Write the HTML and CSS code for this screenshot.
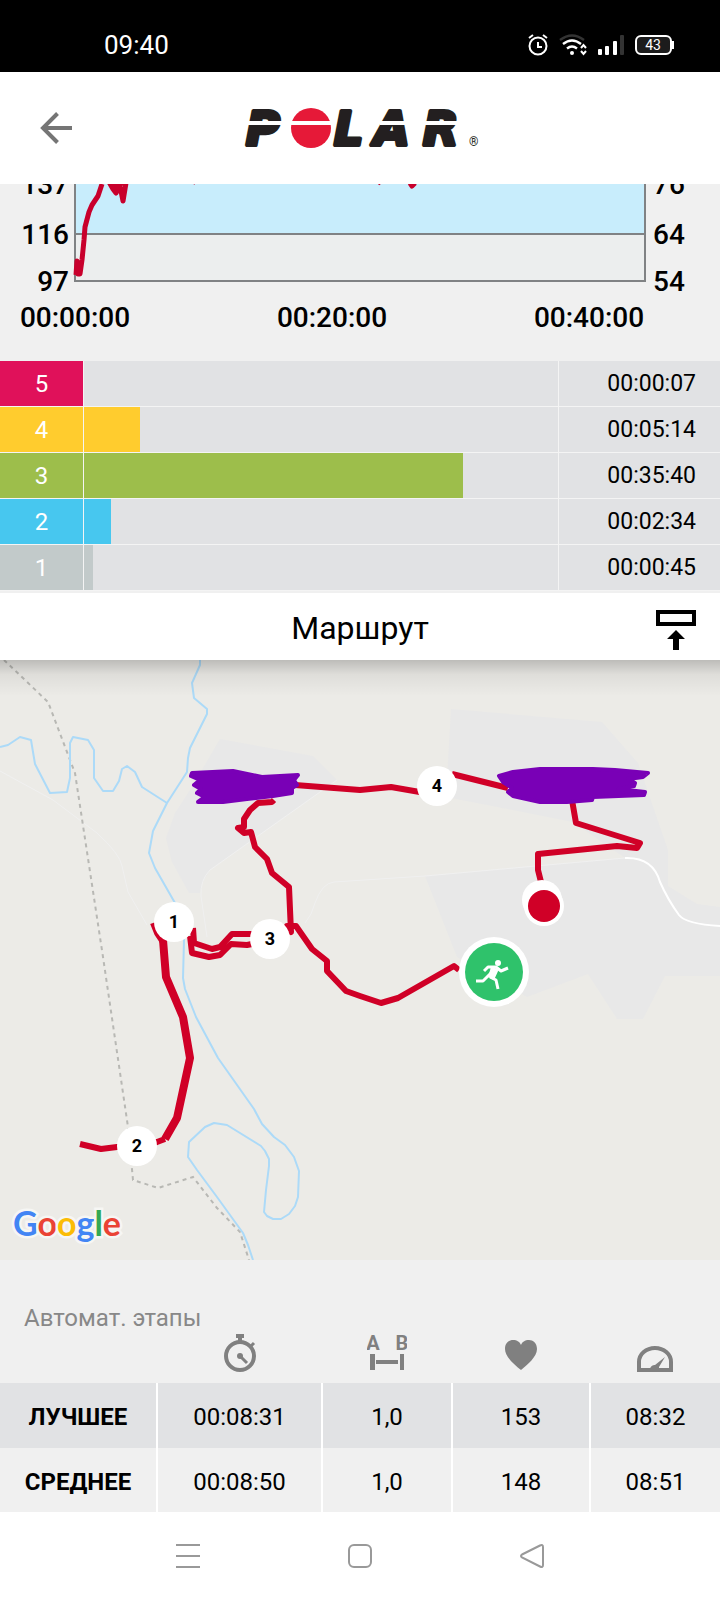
FILE: index.html
```html
<!DOCTYPE html>
<html lang="ru">
<head>
	<meta charset="UTF-8">
	<meta name="viewport" content="width=device-width, initial-scale=1">
	<title>Polar</title>
	<link rel="stylesheet" href="styles.css">
</head>
<body>
<div class="status">
	<span class="clock">09:40</span>
	<div class="status-icons">
		<svg width="20" height="22" viewBox="0 0 20 22" fill="none" stroke="#fff" stroke-width="2">
			<circle cx="10" cy="12" r="8.5"/><path d="M10 8v5h4M1 4l4-3M19 4l-4-3"/>
		</svg>
		<svg width="28" height="22" viewBox="0 0 28 22" fill="none" stroke="#fff" stroke-width="2.4">
			<path d="M1 6Q13-3 25 6" stroke="#333"/>
			<path d="M4 10q9-7 18 0M8 14.500q5-4 10 0"/>
			<circle cx="13" cy="19" r="2" fill="#fff" stroke="none"/>
			<path d="M22 14l2.500-3 2.500 3M22 17l2.500 3 2.500-3" stroke-width="2"/>
		</svg>
		<svg width="26" height="22" viewBox="0 0 26 22" fill="#fff">
			<rect y="15" width="4" height="6" rx="1"/><rect x="7" y="12" width="4" height="9" rx="1"/>
			<rect x="15" y="7" width="4" height="14" rx="1"/><rect x="22" y="1" width="4" height="20" rx="1" fill="#333"/>
		</svg>
		<svg width="40" height="22" viewBox="0 0 40 22">
			<rect x="1" y="2" width="35" height="18" rx="5" fill="#1c1c1c" stroke="#fff" stroke-width="2"/>
			<path d="M38 7v8" stroke="#fff" stroke-width="2"/>
			<text x="18" y="16" class="battery">43</text>
		</svg>
	</div>
</div>

<header class="topbar">
	<button class="back" aria-label="Назад">
		<svg width="32" height="32" viewBox="0 0 32 32" fill="none" stroke="#757575" stroke-width="4"><path d="M32 16H3M17.500 1.500L3 16l14.500 14.500"/></svg>
	</button>
	<svg class="logo" width="240" height="40" viewBox="0 0 240 40" role="img" aria-label="Polar">
		<text class="wordmark" y="37"><tspan x="6">P</tspan><tspan x="94">L</tspan><tspan x="134">A</tspan><tspan x="183">R</tspan></text>
		<circle cx="71" cy="20" r="20" fill="#e61938"/>
		<path d="M8 15h88M140 15h86" stroke="#fff" stroke-width="4"/>
		<text class="reg" x="229" y="38">®</text>
	</svg>
</header>

<section class="chart">
	<svg viewBox="0 0 720 177">
		<path fill="#c8edfc" d="M75 0h570v50H75z"/>
		<path fill="#eceeee" d="M75 50h570v47H75z"/>
		<path class="axis" d="M75 0v97h570V0M75 50h570"/>
		<path class="pulse" d="M76 91l1-14 1 13 2-11 0 11 2-14 2-20 1-13 4-15 3-7 6-9 4-12M109-2l4 7 3 4 4-7 3 15 3-18M114-2l4 7 4-7M195-2l1 1M379-2l2 1M410-1l2 3 3-3"/>
		<g text-anchor="end"><text x="69" y="10">137</text><text x="69" y="60">116</text><text x="69" y="107">97</text></g>
		<text x="653" y="10">76</text><text x="653" y="60">64</text><text x="653" y="107">54</text>
		<g text-anchor="middle"><text x="75" y="143">00:00:00</text><text x="332" y="143">00:20:00</text><text x="589" y="143">00:40:00</text></g>
	</svg>
</section>

<table class="zones">
	<tr class="z5"><th>5</th><td class="track"><div class="bar" style="width:0%"></div></td><td>00:00:07</td></tr>
	<tr class="z4"><th>4</th><td class="track"><div class="bar" style="width:11.8%"></div></td><td>00:05:14</td></tr>
	<tr class="z3"><th>3</th><td class="track"><div class="bar" style="width:80%"></div></td><td>00:35:40</td></tr>
	<tr class="z2"><th>2</th><td class="track"><div class="bar" style="width:5.8%"></div></td><td>00:02:34</td></tr>
	<tr class="z1"><th>1</th><td class="track"><div class="bar" style="width:1.8%"></div></td><td>00:00:45</td></tr>
</table>

<div class="route-title">
	<h2>Маршрут</h2>
	<button aria-label="Свернуть">
		<svg width="40" height="40" viewBox="0 0 40 40"><path d="M2 2h36v12H2z" fill="none" stroke="#000" stroke-width="4"/><path d="M20 20l9 9h-6v11h-6V29h-6z"/></svg>
	</button>
</div>

<div class="map">
	<svg viewBox="0 0 720 600">
		<g fill="#e8e8e8">
			<path d="M220 79L313 96 337 120 210 210 202 223 200 233H189L172 202 166 178 175 153 192 127z"/>
			<path d="M451 49L602 62 638 103 668 190V226L697 244 720 247V316H665L643 359H617L588 314 527 337 457 297 425 216 625 198 573 162 513 150 446 137z"/>
		</g>
		<path class="road" d="M0 111L53 140 97 173Q120 194 122 206L128 232 147 265M337 120L210 210Q200 220 201 236L207 277M305 263Q312 255 315 243 322 223 334 222L425 216 625 198"/>
		<path class="road main" d="M625 198Q653 197 660 222 668 240 679 255 686 264 720 266"/>
		<path class="rail" d="M4 0L48 42 75 113 103 297 128 467 133 520 158 528 193 517 217 548 240 572 249 600"/>
		<path class="river" d="M200 0V5L192 23 194 38 207 49V54L190 88 188 98 187 112 167 143 153 171 149 193 155 208 175 243 184 262V280L183 318 185 329 196 357 218 398 254 449 262 464 274 477 285 485 294 497 299 511 298 537 295 546 289 554 281 559H273L267 556 264 552 266 530 269 506V499L265 491 261 486 227 465 214 463 205 467 189 482 188 497 197 510 217 537 243 573 248 585 253 600"/>
		<path class="river" d="M0 87L8 85 20 77 31 80 35 104 50 133 67 132 70 118V83L73 77 88 80 94 90V118L103 131H113L119 121 122 109 127 106 135 112 142 127 167 143"/>

		<!-- track -->
		<path class="route" d="M459 310L454 306 398 338 381 343 360 336 346 331 327 311V301L312 289 296 266H287L291 272 289 227 272 213 267 199 255 187 251 172 244 173 238 168 244 167V159L250 150 258 143 272 142 274 140"/>
		<path class="route" d="M295 125L360 130 391 127 437 135M452 114L508 128M572 140L576 163 640 183 637 188 617 186 538 194V210L541 222"/>
		<path class="route" d="M252 274H232L220 287 212 289 194 283 193 268M252 284L247 285 231 284 220 295 209 297 192 293 190 276M153 263L157 273 163 282"/>
		<path class="route wide" d="M163 280L166 317 183 357 190 398 177 458 165 479"/>
		<path class="route" d="M165 479L157 482 137 487H117L101 489 80 484"/>

		<g class="scribble">
			<path d="M192 113L233 111 262 117 298 115 294 120 297 125 292 128 292 133 273 136 247 139 223 142 198 142 205 137 197 133 201 129 194 125 200 120 191 116z"/>
			<path d="M499 116L513 112 540 109H593L615 110 648 113 643 117 628 119 635 123 634 126 618 129 645 132 644 135 593 137 592 140 567 142H540L513 136 508 132 512 128 503 122z"/>
		</g>

		<g fill="#fff">
			<circle cx="174" cy="262" r="20"/><circle cx="137" cy="486" r="20"/>
			<circle cx="270" cy="279" r="20"/><circle cx="437" cy="126" r="20"/>
			<circle cx="542" cy="240" r="20"/><circle cx="544" cy="246" r="20"/>
			<circle cx="494" cy="312" r="35"/>
		</g>
		<g class="km"><text x="174" y="268">1</text><text x="137" y="492">2</text><text x="270" y="285">3</text><text x="437" y="132">4</text></g>
		<circle cx="544" cy="246" r="16" fill="#d00027"/>
		<circle cx="494" cy="312" r="29" fill="#2fc26b"/>
		<circle cx="498" cy="303" r="3" fill="#fff"/>
		<path class="runner" d="M484 311L488 307H496L501 311 508 308M476 321H483L491 313M490 317L496 320 498 329"/>
		<path d="M491 307l8 2-5 11-6-3z" fill="#fff"/>

		<text class="google" x="13" y="576"><tspan fill="#4285f4">G</tspan><tspan fill="#ea4335">o</tspan><tspan fill="#fbbc05">o</tspan><tspan fill="#4285f4">g</tspan><tspan fill="#34a853">l</tspan><tspan fill="#ea4335">e</tspan></text>
	</svg>
</div>

<section class="laps">
	<h3>Автомат. этапы</h3>
	<table>
		<tr class="icons">
			<th></th>
			<th><svg width="40" height="40" viewBox="0 0 40 40" fill="none" stroke="#808080">
				<circle cx="20" cy="22" r="14" stroke-width="4"/><path d="M16 2h8M20 2v6" stroke-width="4"/><path d="M31 12l3-3M20 22l7 7" stroke-width="3"/><circle cx="20" cy="22" r="3" fill="#808080" stroke="none"/>
			</svg></th>
			<th><svg width="40" height="40" viewBox="0 0 40 40" fill="#808080">
				<text x="6" y="16">A</text><text x="35" y="16">B</text>
				<path d="M3 20h5v16H3zM9 26h22v4H9zM33 20h4v16h-4z"/>
			</svg></th>
			<th><svg width="40" height="40" viewBox="0 0 40 40" fill="#808080">
				<path d="M20 36C14 31 4 23 4 15 4 9 8 6 12 6c4 0 7 2 8 5 1-3 4-5 8-5 4 0 8 3 8 9 0 8-10 16-16 21z"/>
			</svg></th>
			<th><svg width="40" height="40" viewBox="0 0 40 40" fill="#808080">
				<path d="M4 36V28a16 14 0 0 1 32 0v8z" fill="none" stroke="#808080" stroke-width="4"/><path d="M30 23L24 33 24 36H15C15 32 18 31 20 31z"/>
			</svg></th>
		</tr>
		<tr class="best"><th>ЛУЧШЕЕ</th><td>00:08:31</td><td>1,0</td><td>153</td><td>08:32</td></tr>
		<tr class="avg"><th>СРЕДНЕЕ</th><td>00:08:50</td><td>1,0</td><td>148</td><td>08:51</td></tr>
	</table>
</section>

<nav class="sysnav">
	<button aria-label="Меню"><svg width="24" height="24" viewBox="0 0 24 24"><path d="M0 1h24M0 12h24M0 23h24"/></svg></button>
	<button aria-label="Домой"><svg width="24" height="24" viewBox="0 0 24 24"><rect x="1" y="1" width="22" height="22" rx="5"/></svg></button>
	<button aria-label="Назад"><svg width="24" height="24" viewBox="0 0 24 24"><path d="M2 10.500L20 1.500Q23 0 23 3v18q0 3-3 1.500L2 13.500Q0 12 2 10.500z"/></svg></button>
</nav>
</body>
</html>
```

FILE: styles.css
```css
* { box-sizing:border-box; }
body { margin:0; background:#f0f0f0; color:#000; font-family:Roboto, "Liberation Sans", sans-serif; font-size:24px; }
svg { display:block; }
button { padding:0; border:0; background:none; }
table { width:100%; border-collapse:collapse; table-layout:fixed; }
th, td { padding:0; }

.status { display:flex; justify-content:space-between; align-items:center; height:72px; padding:18px 45px 0 104px; background:#000; color:#fff; }
.clock { font-size:26px; }
.status-icons { display:flex; gap:11px; }
.battery { fill:#fff; font-size:14px; text-anchor:middle; }

.topbar { display:grid; grid-template-columns:32px 1fr 32px; align-items:center; height:112px; padding:0 40px; background:#fff; }
.logo { justify-self:center; overflow:visible; }
.wordmark { font:italic bold 46px "DejaVu Sans", sans-serif; fill:#231f20; stroke:#231f20; stroke-width:4px; stroke-linejoin:round; }
.reg { font-size:12px; fill:#231f20; }

.chart svg { width:100%; }
.chart text { font-size:28px; font-weight:500; }
.axis { fill:none; stroke:#808284; stroke-width:2; }
.pulse { fill:none; stroke:#c8002c; stroke-width:5; stroke-linejoin:round; }

.zones { border-collapse:separate; border-spacing:0; }
.zones th, .zones td { height:46px; background:#e1e2e4; border-bottom:1px solid #f4f4f4; }
.zones th { width:84px; border-right:1px solid #f4f4f4; color:#fff; font-weight:400; }
.zones td { width:162px; padding-right:24px; border-left:1px solid #f4f4f4; font-size:23px; text-align:right; }
.zones .track { width:auto; padding:0; border-left:0; }
.bar { height:45px; }
.zones .z5 th, .z5 .bar { background:#e0115a; }
.zones .z4 th, .z4 .bar { background:#ffcc2e; }
.zones .z3 th, .z3 .bar { background:#9dbe4b; }
.zones .z2 th, .z2 .bar { background:#47c7ef; }
.zones .z1 th, .z1 .bar { background:#c2caca; }

.route-title { display:grid; grid-template-columns:40px 1fr 40px; align-items:center; height:67px; margin-top:2px; padding:0 24px; background:#fff; }
.route-title h2 { grid-column:2; margin:0; padding-top:2px; font-size:32px; font-weight:400; text-align:center; }
.route-title button { padding-top:6px; }

.map { position:relative; background:#ecebe7; }
.map:before { content:""; position:absolute; top:0; left:0; right:0; height:36px; background:linear-gradient(rgba(0,0,0,.2), rgba(0,0,0,.06) 40%, rgba(0,0,0,0)); }
.map svg { width:100%; }
.road { fill:none; stroke:#f0f0f0; stroke-width:1; }
.main { stroke:#fff; stroke-width:2; }
.rail { fill:none; stroke:#b8b8b4; stroke-width:2; stroke-dasharray:4 4; }
.river { fill:none; stroke:#acdaf8; stroke-width:2; stroke-linejoin:round; }
.route { fill:none; stroke:#d00027; stroke-width:6; stroke-linejoin:round; }
.wide { stroke-width:8; }
.scribble { fill:#7900b6; stroke:#7900b6; stroke-width:4; stroke-linejoin:round; }
.km { font-size:18px; font-weight:700; text-anchor:middle; }
.runner { fill:none; stroke:#fff; stroke-width:3; stroke-linejoin:round; }
.google { font:bold 34px Lato, sans-serif; stroke:#f6f6f4; stroke-width:5px; paint-order:stroke; }

.laps { padding-top:44px; }
.laps h3 { margin:0; padding-left:24px; color:#888; font-size:24px; font-weight:400; line-height:28px; }
.laps tr { height:64px; }
.laps .icons { height:51px; }
.laps .icons th { padding:0 0 9px; vertical-align:bottom; border:0; }
.laps .icons svg { margin:0 auto; }
.laps .icons text { font:bold 20px Roboto, sans-serif; text-anchor:middle; }
.laps th:nth-child(1) { width:157px; }
.laps th:nth-child(2) { width:165px; }
.laps th:nth-child(3) { width:130px; }
.laps th:nth-child(4) { width:138px; }
.laps .best { height:65px; background:#e1e2e4; }
.laps td, .laps .best th, .laps .avg th { padding-top:3px; }
.laps td { border-left:2px solid #fff; text-align:center; }

.sysnav { display:flex; justify-content:center; align-items:center; gap:148px; height:88px; background:#fff; }
.sysnav svg { fill:none; stroke:#999; stroke-width:2; }
```
